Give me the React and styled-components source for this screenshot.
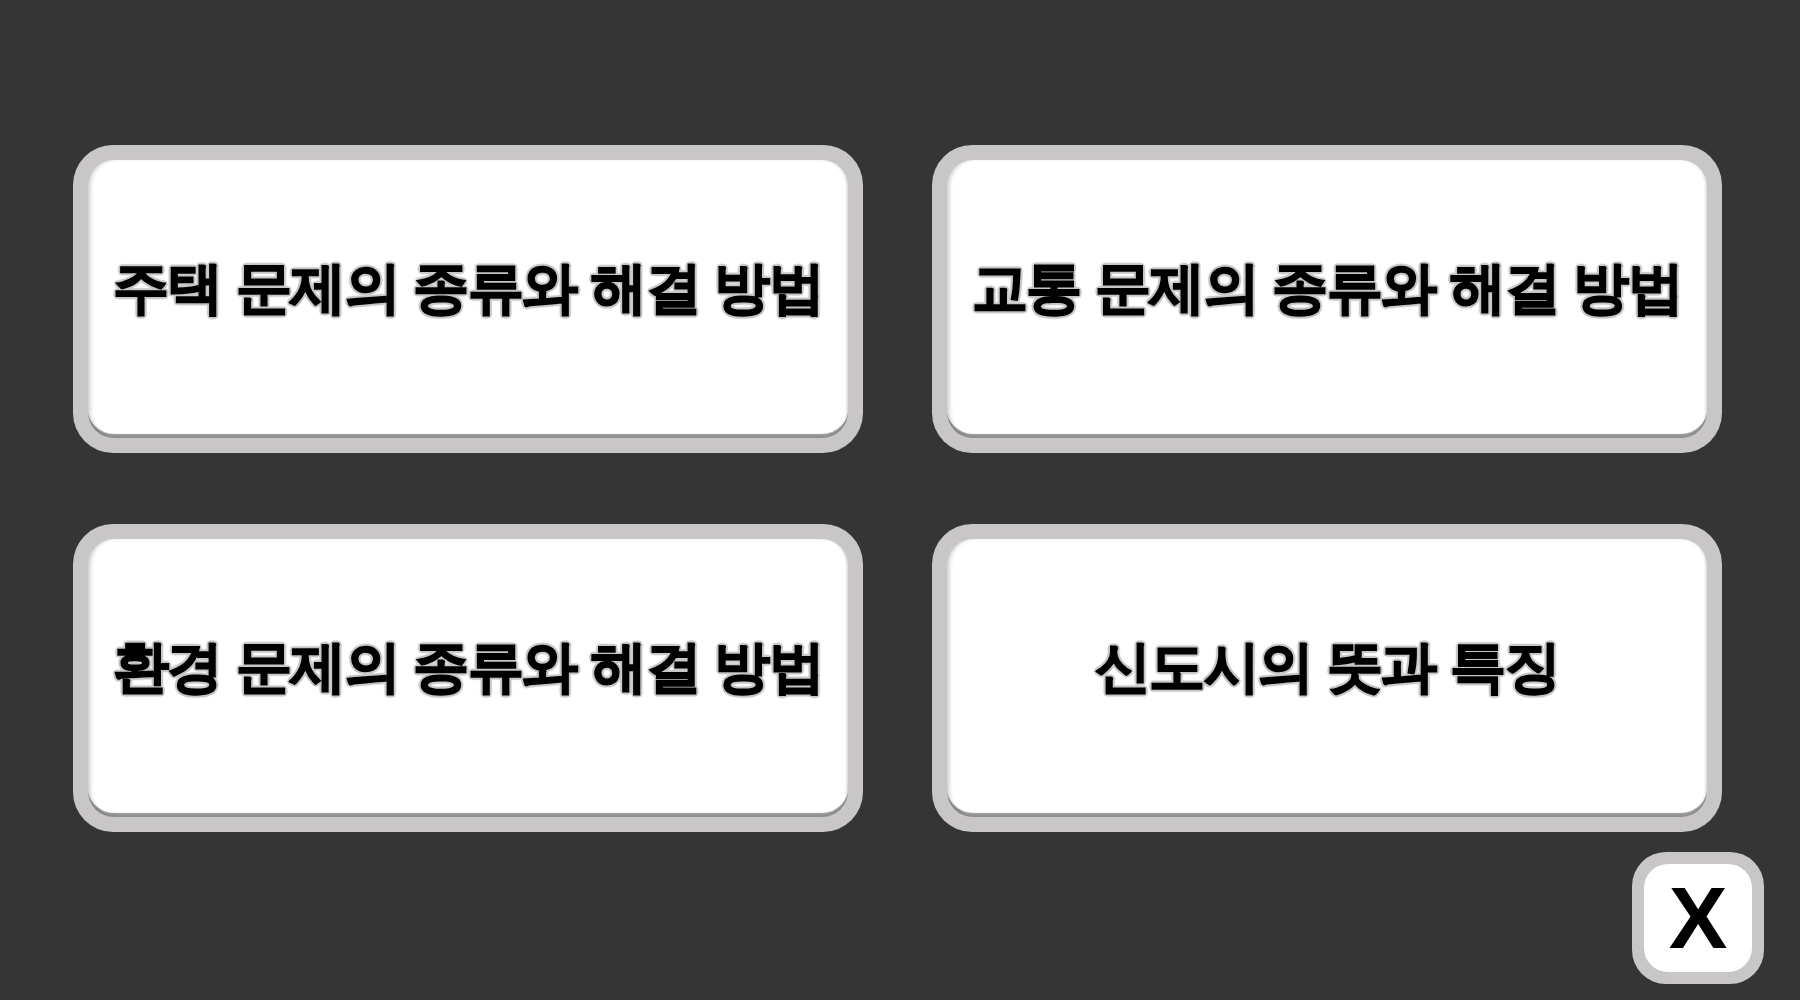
import styled, { createGlobalStyle } from "styled-components";

const GlobalStyle = createGlobalStyle`
    html, body {
        margin: 0;
        padding: 0;
        background: #353535;
    }
`;

const Page = styled.div`
    width: 1800px;
    height: 1000px;
    box-sizing: border-box;
    padding-top: 145px;
    display: flex;
    flex-direction: column;
    background: #353535;
    font-family: "Noto Sans CJK KR", "Noto Sans", sans-serif;
`;

const Grid = styled.div`
    margin-left: 73px;
    display: grid;
    grid-template-columns: repeat(2, 790px);
    grid-auto-rows: 308px;
    column-gap: 69px;
    row-gap: 71px;
`;

const Card = styled.button`
    box-sizing: border-box;
    padding: 15px;
    border: none;
    border-radius: 40px;
    background: #c8c6c7;
    cursor: pointer;
    display: flex;
`;

const CardFace = styled.div`
    flex: 1;
    border-radius: 26px;
    background: #ffffff;
    box-shadow:
        inset 4px 0 4px -2px rgba(0, 0, 0, 0.22),
        inset -3px 0 3px -2px rgba(0, 0, 0, 0.2),
        inset 0 -5px 1px -1px rgba(0, 0, 0, 0.42);
    display: flex;
    align-items: center;
    justify-content: center;
    padding-bottom: 20px;
`;

const Label = styled.span`
    font-size: 56px;
    font-weight: 700;
    letter-spacing: -1.5px;
    color: #000;
    -webkit-text-stroke: 1.5px #000;
    text-shadow:
        2px 0 0 #c6c6c6, -2px 0 0 #c6c6c6, 0 2px 0 #c6c6c6, 0 -2px 0 #c6c6c6,
        2px 2px 0 #c6c6c6, -2px -2px 0 #c6c6c6, 2px -2px 0 #c6c6c6, -2px 2px 0 #c6c6c6,
        3px 0 1px #d0d0d0, -3px 0 1px #d0d0d0, 0 3px 1px #d0d0d0, 0 -3px 1px #d0d0d0;
`;

const Footer = styled.div`
    display: flex;
    justify-content: flex-end;
    padding-right: 36px;
    margin-top: 20px;
`;

const CloseButton = styled.button`
    box-sizing: border-box;
    width: 132px;
    height: 132px;
    padding: 12px;
    border: none;
    border-radius: 34px;
    background: #c8c6c7;
    cursor: pointer;
    display: flex;
`;

const CloseFace = styled.div`
    flex: 1;
    border-radius: 24px;
    background: #fff;
    display: flex;
    align-items: center;
    justify-content: center;
    font-family: "Liberation Sans", Arial, sans-serif;
    font-weight: 700;
    font-size: 88px;
    line-height: 1;
    color: #000;
`;

const TOPICS = [
    "주택 문제의 종류와 해결 방법",
    "교통 문제의 종류와 해결 방법",
    "환경 문제의 종류와 해결 방법",
    "신도시의 뜻과 특징",
];

export default function App() {
    return (
        <>
            <GlobalStyle />
            <Page>
                <Grid>
                    {TOPICS.map((topic) => (
                        <Card key={topic}>
                            <CardFace>
                                <Label>{topic}</Label>
                            </CardFace>
                        </Card>
                    ))}
                </Grid>
                <Footer>
                    <CloseButton>
                        <CloseFace>X</CloseFace>
                    </CloseButton>
                </Footer>
            </Page>
        </>
    );
}
